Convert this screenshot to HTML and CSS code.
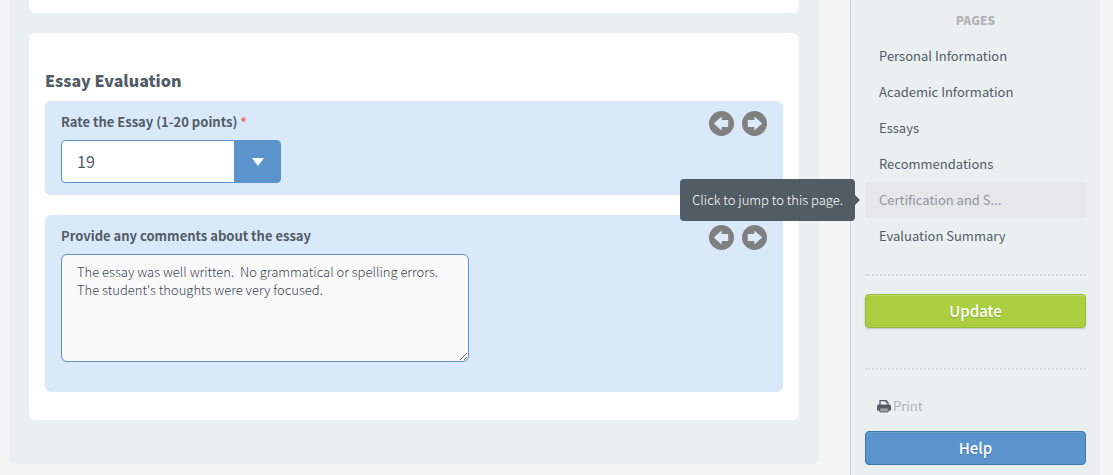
FILE: index.html
```html
<!DOCTYPE html>
<html lang="en">
<head>
  <meta charset="UTF-8">
  <meta name="viewport" content="width=device-width, initial-scale=1.0">
  <title>Essay Evaluation</title>
  <link rel="stylesheet" href="styles.css">
</head>
<body>
  <svg class="symbols" aria-hidden="true">
    <symbol id="arrow-right" viewBox="0 0 26 26">
      <circle cx="13" cy="13" r="13" fill="#808080"/>
      <path d="M6 9.4h6.8V5.8L21 13l-8.2 7.2v-3.6H6z" fill="#dcebfa"/>
    </symbol>
  </svg>

  <div class="page">
    <main class="content">
      <section class="card card-previous"></section>

      <section class="card">
        <h2 class="card-title">Essay Evaluation</h2>

        <div class="question">
          <div class="question-head">
            <label class="question-label" for="rating">Rate the Essay (1-20 points) <span class="required">*</span></label>
            <div class="question-nav">
              <button class="nav-btn nav-prev" type="button" aria-label="Previous"><svg><use href="#arrow-right"/></svg></button>
              <button class="nav-btn" type="button" aria-label="Next"><svg><use href="#arrow-right"/></svg></button>
            </div>
          </div>
          <div class="select-box">
            <select id="rating">
              <option>18</option>
              <option selected>19</option>
              <option>20</option>
            </select>
          </div>
        </div>

        <div class="question question-comments">
          <div class="question-head">
            <label class="question-label" for="comments">Provide any comments about the essay</label>
            <div class="question-nav">
              <button class="nav-btn nav-prev" type="button" aria-label="Previous"><svg><use href="#arrow-right"/></svg></button>
              <button class="nav-btn" type="button" aria-label="Next"><svg><use href="#arrow-right"/></svg></button>
            </div>
          </div>
          <textarea class="comments" id="comments" spellcheck="false">The essay was well written.  No grammatical or spelling errors.
The student's thoughts were very focused.</textarea>
        </div>
      </section>
    </main>

    <aside class="sidebar">
      <h3 class="sidebar-title">PAGES</h3>
      <ul class="page-list">
        <li><a href="#">Personal Information</a></li>
        <li><a href="#">Academic Information</a></li>
        <li><a href="#">Essays</a></li>
        <li><a href="#">Recommendations</a></li>
        <li class="current">
          <a href="#" aria-describedby="tip">Certification and S...</a>
          <span class="tooltip" id="tip" role="tooltip">Click to jump to this page.</span>
        </li>
        <li><a href="#">Evaluation Summary</a></li>
      </ul>
      <div class="sidebar-section">
        <button class="btn btn-update" type="button">Update</button>
      </div>
      <div class="sidebar-section sidebar-tools">
        <a class="print" href="#">
          <svg viewBox="0 0 14 13" aria-hidden="true">
            <path d="M3 6V.6h6.2L11 2.4V6" fill="#f4f6f6" stroke="#525c65" stroke-width="1.2"/>
            <path d="M9 .6v2h2" fill="none" stroke="#525c65"/>
            <path d="M1.5 4.5h11Q14 4.5 14 6v4.5H0V6Q0 4.5 1.5 4.5z" fill="#525c65"/>
            <path d="M2.8 8h8.4v3.9H2.8z" fill="#b4bbbf" stroke="#525c65"/>
            <path d="M4 10h6" stroke="#7d868d"/>
          </svg>
          <span>Print</span>
        </a>
        <button class="btn btn-help" type="button">Help</button>
      </div>
    </aside>
  </div>
</body>
</html>
```

FILE: styles.css
```css
* {
  margin: 0;
  padding: 0;
  box-sizing: border-box;
}

body {
  background: #f4f6f6;
  color: #525c65;
  font-family: "Noto Sans CJK SC", "Noto Sans", sans-serif;
  font-size: 13px;
  line-height: 18px;
}

button,
select,
textarea {
  font: inherit;
  color: inherit;
}

a {
  color: inherit;
  text-decoration: none;
}

.symbols {
  display: none;
}

.page {
  display: flex;
  min-height: 100vh;
  padding: 0 13px 0 9px;
}

/* main form */
.content {
  flex: 1;
  align-self: flex-start;
  display: flex;
  flex-direction: column;
  gap: 20px;
  margin-right: 31px;
  padding: 0 20px 44px;
  background: #eaf0f0;
  border-radius: 0 0 6px 6px;
}

.card {
  padding: 35px 16px 28px;
  background: #fff;
  border-radius: 6px;
}

.card-previous {
  padding: 0;
  height: 13px;
  border-radius: 0 0 6px 6px;
}

.card-title {
  margin-bottom: 9px;
  font-size: 16px;
  font-weight: 900;
  line-height: 24px;
}

.question {
  padding: 10px 16px 12px;
  background: #d9e9fa;
  border-radius: 6px;
}

.question-comments {
  margin-top: 20px;
  padding-bottom: 30px;
}

.question-head {
  display: flex;
  justify-content: space-between;
  align-items: flex-start;
  height: 29px;
}

.question-label {
  line-height: 22px;
  font-weight: bold;
}

.required {
  color: #f06a60;
}

.question-nav {
  display: flex;
  gap: 8px;
}

.nav-btn {
  width: 25px;
  height: 25px;
  border: 0;
  background: none;
  cursor: pointer;
}

.nav-btn svg {
  display: block;
  width: 25px;
  height: 25px;
}

.nav-prev svg {
  transform: scaleX(-1);
}

.select-box {
  position: relative;
  width: 220px;
}

.select-box select {
  display: block;
  width: 100%;
  height: 43px;
  padding: 0 63px 2px 15px;
  border: 1px solid #5b94cc;
  border-radius: 4px;
  background: linear-gradient(#5b94cc, #5b94cc) right / 46px 100% no-repeat #fff;
  font-size: 16px;
  appearance: none;
}

.select-box::after {
  content: "";
  position: absolute;
  top: 18px;
  right: 17px;
  border: 6px solid transparent;
  border-top: 8px solid #fff;
  border-bottom: 0;
  pointer-events: none;
}

.comments {
  display: block;
  width: 408px;
  max-width: 100%;
  height: 108px;
  padding: 8px 15px;
  border: 1px solid #5b94cc;
  border-radius: 6px;
  background: #f9f9f9;
  color: #3c454d;
  font-weight: 300;
}

/* sidebar */
.sidebar {
  width: 250px;
  padding: 8px 14px 10px;
  border-left: 1px solid #c3ced6;
  background: #eaf0f0;
}

.sidebar-title {
  padding-bottom: 6px;
  color: #b0b3b5;
  font-size: 12px;
  font-weight: 900;
  line-height: 24px;
  text-align: center;
}

.page-list {
  list-style: none;
  margin-bottom: 20px;
}

.page-list li {
  position: relative;
}

.page-list a {
  display: block;
  padding: 0 14px;
  line-height: 36px;
}

.page-list .current a {
  background: #e4e8e9;
  color: #8f979d;
}

.tooltip {
  position: absolute;
  top: -3px;
  right: calc(100% + 10px);
  padding: 0 12px;
  border-radius: 4px;
  background: #525c65;
  color: #fff;
  font-weight: 300;
  line-height: 42px;
  white-space: nowrap;
}

.tooltip::after {
  content: "";
  position: absolute;
  top: 16px;
  left: 100%;
  border: 5px solid transparent;
  border-left-color: #525c65;
  border-right: 0;
}

.sidebar-section {
  padding: 18px 0 40px;
  border-top: 2px dotted #d6dadb;
}

.sidebar-tools {
  padding: 24px 0 0;
}

.btn {
  display: block;
  width: 100%;
  height: 34px;
  border: 1px solid;
  border-radius: 4px;
  color: #fff;
  font-size: 15px;
  font-weight: 500;
  text-shadow: 0 1px 1px rgba(0, 0, 0, 0.2);
  cursor: pointer;
}

.btn-update {
  border-color: #98bd37;
  background: #abcf41;
  box-shadow: inset 0 1px #bddb68, 0 1px 2px rgba(0, 0, 0, 0.2);
}

.btn-help {
  border-color: #3f78b0;
  background: #5b94cc;
  box-shadow: inset 0 1px #6ba0d2;
}

.print {
  display: flex;
  align-items: center;
  gap: 2px;
  padding: 0 12px;
  margin-bottom: 13px;
  color: #b0b3b5;
  line-height: 24px;
}

.print svg {
  width: 14px;
  height: 13px;
}
```
